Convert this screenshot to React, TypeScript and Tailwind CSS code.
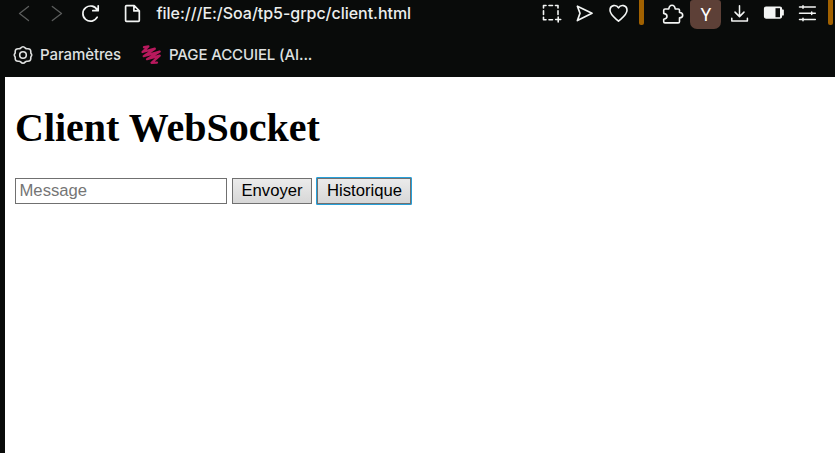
import type { ReactNode } from 'react';

type IconProps = { className: string; box: string; children: ReactNode; width?: number };

function Icon({ className, box, children, width = 1.5 }: IconProps) {
  return (
    <svg
      className={`block shrink-0 ${className}`}
      viewBox={box}
      fill="none"
      stroke="currentColor"
      strokeWidth={width}
      strokeLinecap="round"
      strokeLinejoin="round"
    >
      {children}
    </svg>
  );
}

function AddressBar() {
  return (
    <div className="flex h-[29px] items-start overflow-hidden pl-[14px]">
      <Icon className="h-[27px] w-5 text-[#5b5d5c]" box="0 0 20 27" width={1.3}>
        <path d="M14.5 6.5 5.5 13.5 14.5 20.5" />
      </Icon>
      <Icon className="ml-[13px] h-[27px] w-5 text-[#5b5d5c]" box="0 0 20 27" width={1.3}>
        <path d="M5.3 6.5 14.5 13.5 5.3 20.5" />
      </Icon>
      <Icon className="ml-[13px] h-[27px] w-[22px]" box="0 0 22 27" width={1.7}>
        <path d="M17.2 17.2A7.6 7.6 0 1 1 17.3 10.2M18.2 5.8v4.9h-5.4" />
      </Icon>
      <Icon className="ml-[20px] h-[27px] w-5" box="0 0 20 27" width={1.7}>
        <path d="M4.5 5.6h7.7l5.1 5.2v9.6q0 .9-.9.9H4.5q-.9 0-.9-.9V6.5q0-.9.9-.9ZM11.9 5.8v5.1h5.2" />
      </Icon>
      <span className="ml-[14.5px] w-[385.5px] whitespace-nowrap text-[16px] font-medium leading-[27px] tracking-[-0.03px] text-[#eceeed]">
        file:///E:/Soa/tp5-grpc/client.html
      </span>
      <Icon className="h-[27px] w-5" box="0 0 20 27" width={1.6}>
        <path d="M1.5 8V5.5H4M7 5.5h3.5M13.5 5.5H16V8M1.5 10.8v3.6M16 10.8v3.6M1.5 17.2v2.6H4M7 19.8h3.5M16.2 17v5M13.7 19.5h5" />
      </Icon>
      <Icon className="ml-[13px] h-[27px] w-5" box="0 0 20 27" width={1.7}>
        <path d="M2.4 6.2 17 13.3 2.4 20.5 5 13.3Z" />
      </Icon>
      <Icon className="ml-[13px] h-[27px] w-[21px]" box="0 0 21 27" width={1.6}>
        <path d="M10.5 21.2C6.5 17.5 2 14.5 2 10.2c0-5.3 6.4-6.2 8.5-2.3 2.1-3.9 8.5-3 8.5 2.3 0 4.3-4.5 7.3-8.5 11Z" />
      </Icon>
      <span className="ml-[10px] h-[25px] w-[5px] rounded-b-[2px] bg-[#a16100]" />
      <Icon className="ml-[18px] h-[27px] w-[22px]" box="0 0 22 27" width={1.6}>
        <path d="M3 9h3.8Q7.2 5.2 10 5.2T13.2 9h3q1.3 0 1.3 1.3v2.2q3.2.3 3.2 2.7t-3.2 2.7V21.7q0 1.2-1.3 1.2H3q-1.3 0-1.3-1.2V19.2q3.3-.5 3.3-2.9T1.7 13.4V10.3Q1.7 9 3 9Z" />
      </Icon>
      <span className="ml-[6px] flex h-[29px] w-[31px] items-center justify-center rounded-[7px] rounded-t-[3px] bg-[#5d4037] pl-px font-['Roboto',sans-serif] text-[18px] text-white">
        Y
      </span>
      <Icon className="ml-[9px] h-[27px] w-5" box="0 0 20 27" width={1.5}>
        <path d="M9.5 5.8v10.5M5 12.1l4.5 4.5 4.5-4.5M1.8 18.2v2.8h15.6v-2.8" />
      </Icon>
      <Icon className="ml-[13px] h-[27px] w-[22px]" box="0 0 22 27" width={1.2}>
        <rect x="1.5" y="7.1" width="17" height="11" rx="1.5" fill="currentColor" />
        <path d="M12.5 8.2h4.5v9h-4.5Z" fill="#090b0a" stroke="none" />
        <path d="M19 10h1.2v5H19Z" fill="currentColor" />
      </Icon>
      <Icon className="ml-[13px] h-[27px] w-5" box="0 0 20 27" width={1.5}>
        <path d="M1.5 7h15.8M1.5 13.3h15.8M1.5 19.5h15.8" />
        <path d="M5 5.7v2.6M13.7 12v2.6M5 18.2v2.6" />
      </Icon>
      <span className="ml-[10px] h-[25px] w-[5px] rounded-b-[2px] bg-[#a16100]" />
    </div>
  );
}

function BookmarksBar() {
  return (
    <div className="flex h-12 items-start pl-[13px] pt-[16px] text-[15px] font-medium leading-5 text-[#dfe1e0]">
      <Icon className="h-5 w-5" box="0 0 20 20" width={1.6}>
        <path d="M7.6 3.1Q10 .4 12.4 3.1q.7.8 1.7.7 3.9-.5 3.7 3.2-.1 1 .3 1.5 1.2 1.500 0 3-.4.5-.3 1.5.2 3.7-3.7 3.2-1-.1-1.7.7-2.4 2.7-4.8 0-.7-.8-1.7-.7-3.9.5-3.7-3.2.1-1-.3-1.5-1.2-1.5 0-3 .4-.5.3-1.5Q2 3.300 5.900 3.800q1 .1 1.700-.7Z" />
        <circle cx="10" cy="10" r="3.3" />
      </Icon>
      <span className="ml-[7px] w-[100px] whitespace-nowrap tracking-[-0.09px]">Paramètres</span>
      <Icon className="h-5 w-[22px] text-[#b8195d]" box="0 0 22 20" width={2.3}>
        <path d="M4 2.2 8.4 1.4 2.5 7 14.8 3.700 3.700 11.200 19.700 6.600 7 14.200 19.700 10.600 11.500 17.800 17 17.600" />
      </Icon>
      <span className="ml-[7px] whitespace-nowrap tracking-[-0.12px]">PAGE ACCUIEL (AI...</span>
    </div>
  );
}

export default function App() {
  return (
    <div className="flex h-[453px] w-[835px] flex-col overflow-hidden bg-[#090b0a] font-['Inter',sans-serif] text-[#f3f5f4]">
      <AddressBar />
      <BookmarksBar />
      <main className="ml-[5px] flex-1 bg-white pl-[10px] pt-[28px] text-black">
        <h1 className="font-['Liberation_Serif',serif] text-[40px] font-bold leading-[46px]">
          Client WebSocket
        </h1>
        <form
          className="mt-[26px] flex items-start font-['Liberation_Sans',sans-serif] text-[16.67px] leading-5"
          onSubmit={(event) => event.preventDefault()}
        >
          <input
            type="text"
            placeholder="Message"
            className="mt-px h-[26px] w-[212px] border border-[#707070] bg-white px-[3.5px] pb-px outline-none placeholder:text-[#757575]"
          />
          <button
            type="button"
            className="ml-[5px] mt-px flex h-[26px] w-20 items-center justify-center border border-[#707070] bg-linear-to-b from-[#ebebeb] to-[#d7d7d7] pb-px"
          >
            Envoyer
          </button>
          <button
            type="button"
            className="ml-[4px] h-7 w-24 rounded-[1px] border border-[#26a0da] bg-[#707070] p-px"
          >
            <span className="flex h-6 items-center justify-center bg-linear-to-b from-[#ebebeb] to-[#d7d7d7] pb-px pl-px">
              Historique
            </span>
          </button>
        </form>
      </main>
    </div>
  );
}
